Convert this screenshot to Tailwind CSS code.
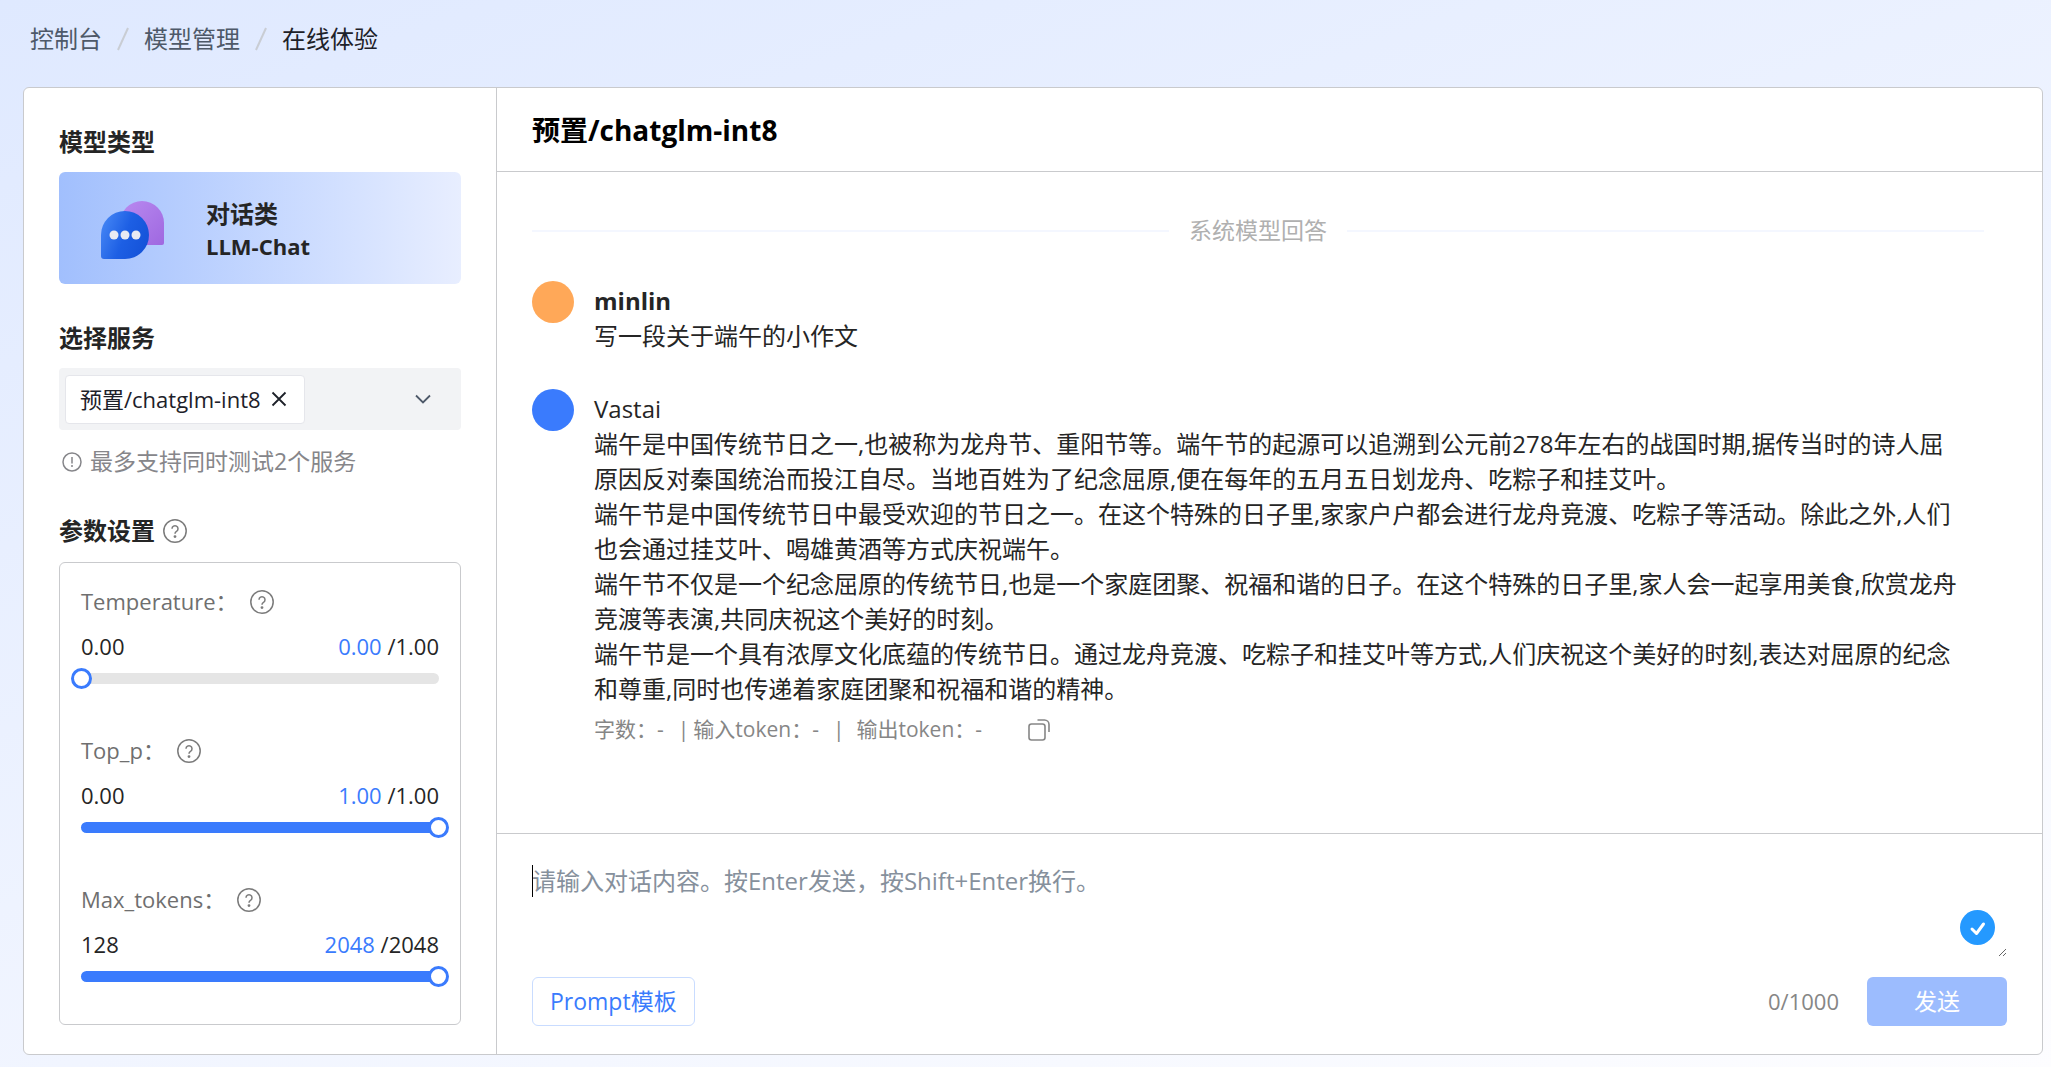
<!DOCTYPE html>
<html lang="zh-CN">
<head>
    <meta charset="UTF-8">
    <meta name="viewport" content="width=device-width, initial-scale=1.0">
    <title>在线体验</title>
    <script src="https://cdn.jsdelivr.net/npm/@tailwindcss/browser@4"></script>
    <style>
        body {
            font-family: 'Open Sans', 'Noto Sans CJK SC', sans-serif;
        }
    </style>
</head>
<body class="min-h-screen flex flex-col bg-linear-160 from-[#dfe9ff] to-[#fdfdff] text-[#252525] text-2xl leading-[35px]">
    <!-- Icons -->
    <svg class="hidden">
        <symbol id="help" viewBox="0 0 24 24" fill="none" stroke="currentColor" stroke-width="1.5">
            <circle cx="12" cy="12" r="11.2"/>
            <path d="M9 9.800a3 3 0 1 1 4.500 2.600c-1 .6-1.500 1.100-1.500 2.400"/>
            <circle cx="12" cy="17.6" r=".7" fill="currentColor"/>
        </symbol>
    </svg>

    <!-- Breadcrumb -->
    <nav class="flex h-[87px] items-center gap-[14px] pb-[10px] pl-[30px]">
        <a href="#" class="text-[#4e5969]">控制台</a>
        <svg class="h-6 w-[14px] text-[#c9cdd4]" viewBox="0 0 14 24" fill="none" stroke="currentColor" stroke-width="2"><path d="M12 1 2 23"/></svg>
        <a href="#" class="text-[#4e5969]">模型管理</a>
        <svg class="h-6 w-[14px] text-[#c9cdd4]" viewBox="0 0 14 24" fill="none" stroke="currentColor" stroke-width="2"><path d="M12 1 2 23"/></svg>
        <span class="text-[#1d2129]">在线体验</span>
    </nav>

    <div class="mb-[14px] ml-[23px] mr-2 flex flex-1 rounded-md border border-[#c9cacd] bg-white">
        <!-- Sidebar -->
        <aside class="w-[473px] shrink-0 border-r border-[#c9cacd] px-[35px] pb-[29px] pt-9">
            <h2 class="font-bold">模型类型</h2>
            <div class="mt-[13px] flex h-28 items-center rounded-md bg-linear-to-r from-[#a1bffd] to-[#e8eeff] pl-[41px] pt-1">
                <svg class="h-[62px] w-[66px]" viewBox="0 0 66 62">
                    <defs>
                        <linearGradient id="purple" x1="0" y1="0" x2="1" y2="1">
                            <stop offset="0" stop-color="#b98af0"/>
                            <stop offset="1" stop-color="#9f68e0"/>
                        </linearGradient>
                        <linearGradient id="blue" x1="0" y1=".3" x2="1" y2=".7">
                            <stop offset="0" stop-color="#4384f4"/>
                            <stop offset=".5" stop-color="#1d5fe4"/>
                            <stop offset="1" stop-color="#1452d8"/>
                        </linearGradient>
                    </defs>
                    <path d="M42 2a22 22 0 0 1 22 22v20a2 2 0 0 1-2 2H42a22 22 0 0 1 0-44z" fill="url(#purple)"/>
                    <path d="M25 12a24 24 0 0 1 0 48H4a3 3 0 0 1-3-3V36a24 24 0 0 1 24-24z" fill="url(#blue)"/>
                    <g fill="#e9eaf2">
                        <circle cx="14" cy="36" r="4.5"/>
                        <circle cx="25" cy="36" r="4.5"/>
                        <circle cx="36" cy="36" r="4.5"/>
                    </g>
                </svg>
                <div class="ml-10">
                    <div class="font-bold leading-8">对话类</div>
                    <div class="text-[22px] font-bold leading-8">LLM-Chat</div>
                </div>
            </div>

            <h2 class="mt-9 font-bold">选择服务</h2>
            <div class="mt-[13px] flex h-[62px] items-center justify-between rounded bg-[#f2f3f5] pl-[6px] pr-[30px]">
                <div class="flex h-[49px] items-center gap-[10px] rounded border border-[#e5e6eb] bg-white pl-[14px] pr-[17px] text-[22px] text-[#1d2129]">
                    预置/chatglm-int8
                    <button aria-label="移除">
                        <svg class="size-4" viewBox="0 0 16 16" fill="none" stroke="currentColor" stroke-width="1.8"><path d="m1.5 1.5 13 13m0-13-13 13"/></svg>
                    </button>
                </div>
                <button aria-label="展开">
                    <svg class="size-4 text-[#4e5969]" viewBox="0 0 16 16" fill="none" stroke="currentColor" stroke-width="1.8"><path d="m1 4.5 7 7 7-7"/></svg>
                </button>
            </div>
            <p class="mt-[14px] flex items-center gap-2 pl-[3px] text-[23px] text-[#86868a]">
                <svg class="size-5" viewBox="0 0 20 20" fill="none" stroke="currentColor" stroke-width="1.5"><circle cx="10" cy="10" r="9"/><path d="M10 5v6.500M10 13v2"/></svg>
                最多支持同时测试2个服务
            </p>

            <h2 class="mt-[34px] flex items-center gap-2 font-bold">参数设置
                <svg class="size-6 text-[#7b7b7b]"><use href="#help"/></svg>
            </h2>
            <div class="mt-[14px] flex flex-col gap-[49px] rounded-md border border-[#c9cacd] px-[21px] pb-[42px] pt-[21px]">
                <div>
                    <div class="flex items-center gap-3 text-[22px] text-[#6f6f6f]">
                        <label for="temperature">Temperature：</label>
                        <svg class="size-6 text-[#7b7b7b]"><use href="#help"/></svg>
                    </div>
                    <div class="mt-[10px] flex justify-between text-[22px]">
                        <span>0.00</span>
                        <span><span class="text-[#3a7bfd]">0.00</span> /1.00</span>
                    </div>
                    <div class="relative mt-[9px] h-[11px] rounded-full bg-[#e5e5e5]">
                        <input id="temperature" type="range" min="0" max="1" step="0.01" value="0" class="absolute -left-[10px] -top-[5px] h-[21px] w-[378px] appearance-none bg-transparent [&::-webkit-slider-thumb]:size-[21px] [&::-webkit-slider-thumb]:appearance-none [&::-webkit-slider-thumb]:rounded-full [&::-webkit-slider-thumb]:border-3 [&::-webkit-slider-thumb]:border-[#3a7bfd] [&::-webkit-slider-thumb]:bg-white">
                    </div>
                </div>
                <div>
                    <div class="flex items-center gap-3 text-[22px] text-[#6f6f6f]">
                        <label for="top_p">Top_p：</label>
                        <svg class="size-6 text-[#7b7b7b]"><use href="#help"/></svg>
                    </div>
                    <div class="mt-[10px] flex justify-between text-[22px]">
                        <span>0.00</span>
                        <span><span class="text-[#3a7bfd]">1.00</span> /1.00</span>
                    </div>
                    <div class="relative mt-[9px] h-[11px] rounded-full bg-[#3a7bfd]">
                        <input id="top_p" type="range" min="0" max="1" step="0.01" value="1" class="absolute -left-[10px] -top-[5px] h-[21px] w-[378px] appearance-none bg-transparent [&::-webkit-slider-thumb]:size-[21px] [&::-webkit-slider-thumb]:appearance-none [&::-webkit-slider-thumb]:rounded-full [&::-webkit-slider-thumb]:border-3 [&::-webkit-slider-thumb]:border-[#3a7bfd] [&::-webkit-slider-thumb]:bg-white">
                    </div>
                </div>
                <div>
                    <div class="flex items-center gap-3 text-[22px] text-[#6f6f6f]">
                        <label for="max_tokens">Max_tokens：</label>
                        <svg class="size-6 text-[#7b7b7b]"><use href="#help"/></svg>
                    </div>
                    <div class="mt-[10px] flex justify-between text-[22px]">
                        <span>128</span>
                        <span><span class="text-[#3a7bfd]">2048</span> /2048</span>
                    </div>
                    <div class="relative mt-[9px] h-[11px] rounded-full bg-[#3a7bfd]">
                        <input id="max_tokens" type="range" min="128" max="2048" value="2048" class="absolute -left-[10px] -top-[5px] h-[21px] w-[378px] appearance-none bg-transparent [&::-webkit-slider-thumb]:size-[21px] [&::-webkit-slider-thumb]:appearance-none [&::-webkit-slider-thumb]:rounded-full [&::-webkit-slider-thumb]:border-3 [&::-webkit-slider-thumb]:border-[#3a7bfd] [&::-webkit-slider-thumb]:bg-white">
                    </div>
                </div>
            </div>
        </aside>

        <!-- Chat -->
        <main class="flex min-w-0 flex-1 flex-col">
            <h1 class="flex h-[84px] items-center border-b border-[#c9cacd] pl-[35px] pt-[2px] text-[28px] font-bold text-black">预置/chatglm-int8</h1>

            <div class="flex-1 pl-[35px] pr-[58px] pt-[41px]">
                <div class="flex items-center gap-5 text-[23px] text-[#b0b0b0]">
                    <div class="h-[2px] flex-1 bg-[#f4f7ff]"></div>
                    系统模型回答
                    <div class="h-[2px] flex-1 bg-[#f4f7ff]"></div>
                </div>

                <div class="mt-8 flex gap-5">
                    <div class="mt-[1px] size-[42px] shrink-0 rounded-full bg-[#ffa858]"></div>
                    <div>
                        <div class="mt-[3px] font-bold">minlin</div>
                        <p>写一段关于端午的小作文</p>
                    </div>
                </div>

                <div class="mt-[35px] flex gap-5">
                    <div class="mt-[1px] size-[42px] shrink-0 rounded-full bg-[#3a7bfd]"></div>
                    <div class="whitespace-nowrap">
                        <div class="mt-[3px]">Vastai</div>
                        <p>端午是中国传统节日之一,也被称为龙舟节、重阳节等。端午节的起源可以追溯到公元前278年左右的战国时期,据传当时的诗人屈<br>原因反对秦国统治而投江自尽。当地百姓为了纪念屈原,便在每年的五月五日划龙舟、吃粽子和挂艾叶。</p>
                        <p>端午节是中国传统节日中最受欢迎的节日之一。在这个特殊的日子里,家家户户都会进行龙舟竞渡、吃粽子等活动。除此之外,人们<br>也会通过挂艾叶、喝雄黄酒等方式庆祝端午。</p>
                        <p>端午节不仅是一个纪念屈原的传统节日,也是一个家庭团聚、祝福和谐的日子。在这个特殊的日子里,家人会一起享用美食,欣赏龙舟<br>竞渡等表演,共同庆祝这个美好的时刻。</p>
                        <p>端午节是一个具有浓厚文化底蕴的传统节日。通过龙舟竞渡、吃粽子和挂艾叶等方式,人们庆祝这个美好的时刻,表达对屈原的纪念<br>和尊重,同时也传递着家庭团聚和祝福和谐的精神。</p>
                        <div class="mt-[6px] flex items-center text-[21px] text-[#868686]">
                            <span class="mr-[14px]">字数：-</span>
                            <span class="mr-1">|</span>
                            <span class="mr-[14px]">输入token：-</span>
                            <span class="mr-3">|</span>
                            <span>输出token：-</span>
                            <button aria-label="复制" class="ml-[46px]">
                                <svg class="size-[22px]" viewBox="0 0 22 22" fill="none" stroke="currentColor" stroke-width="1.6"><rect x="1" y="5" width="16" height="16" rx="2.5"/><path d="M9.500 1h7A4.500 4.500 0 0 1 21 5.500V13"/></svg>
                            </button>
                        </div>
                    </div>
                </div>
            </div>

            <!-- Message box -->
            <div class="border-t border-[#c9cacd] pb-7 pl-[35px] pr-[35px] pt-[29px]">
                <div class="relative">
                    <textarea aria-label="对话内容" placeholder="请输入对话内容。按Enter发送，按Shift+Enter换行。" class="block h-[94px] w-full resize text-2xl leading-[35px] outline-none placeholder:text-[#86909c]"></textarea>
                    <span class="absolute left-0 top-[2px] h-8 w-px bg-black"></span>
                    <svg class="absolute bottom-3 right-3 size-[35px]" viewBox="0 0 35 35"><circle cx="17.5" cy="17.5" r="17.5" fill="#2499ff"/><path d="m12 19 4.500 4.500 7-9.500" fill="none" stroke="#fff" stroke-width="3" stroke-linecap="round" stroke-linejoin="round"/></svg>
                </div>
                <div class="mt-5 flex items-center">
                    <button class="h-[49px] rounded-md border border-[#c9dcff] px-[17px] text-[23px] text-[#3a7bfd]">Prompt模板</button>
                    <span class="ml-auto text-[22px] text-[#868686]">0/1000</span>
                    <button class="ml-7 h-[49px] w-[140px] rounded-md bg-[#9cbcfe] text-[23px] text-white">发送</button>
                </div>
            </div>
        </main>
    </div>
</body>
</html>
